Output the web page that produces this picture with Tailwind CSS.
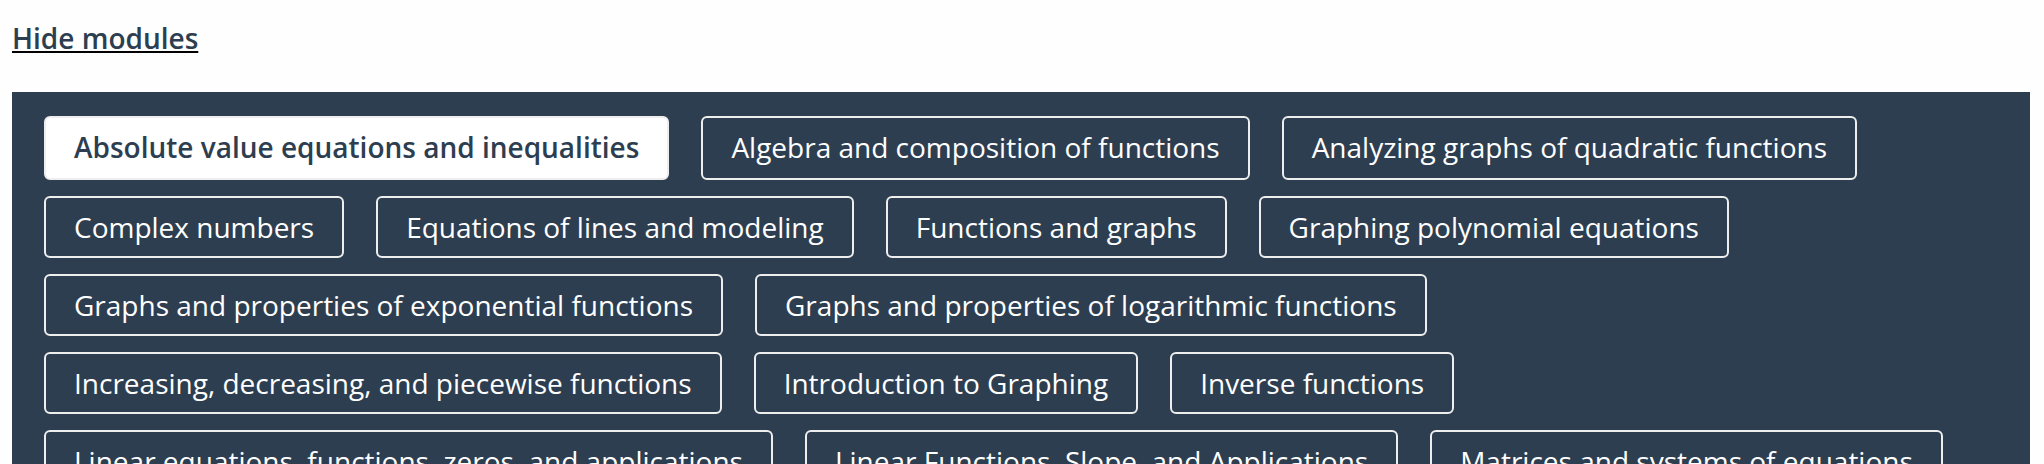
<!DOCTYPE html>
<html lang="en">
<head>
<meta charset="utf-8">
<title>Modules</title>
<script src="https://cdn.jsdelivr.net/npm/@tailwindcss/browser@4"></script>
</head>
<body class="h-screen overflow-hidden bg-[#fefefe] pl-3 pr-3.5 pt-[19px] font-['Open_Sans',sans-serif] text-[28px] leading-[38px] text-[#2d3e50]">
<header class="mb-[35px] flex">
<button type="button" class="font-semibold underline decoration-black decoration-2 underline-offset-[2px] [text-decoration-skip-ink:none]">Hide modules</button>
</header>
<nav aria-label="Modules" class="flex flex-wrap gap-x-8 gap-y-4 bg-[#2d3e50] px-8 py-6 text-white">
<button type="button" aria-pressed="true" class="rounded-md border-2 border-[#eeeeee] bg-white px-7 pt-2.5 pb-3 font-semibold text-[#2d3e50]">Absolute value equations and inequalities</button>
<button type="button" class="rounded-md border-2 border-[#eeeeee] px-7 pt-2.5 pb-3">Algebra and composition of functions</button>
<button type="button" class="rounded-md border-2 border-[#eeeeee] px-7 pt-2.5 pb-3">Analyzing graphs of quadratic functions</button>
<button type="button" class="rounded-md border-2 border-[#eeeeee] px-7 py-2.5">Complex numbers</button>
<button type="button" class="rounded-md border-2 border-[#eeeeee] px-7 py-2.5">Equations of lines and modeling</button>
<button type="button" class="rounded-md border-2 border-[#eeeeee] px-7 py-2.5">Functions and graphs</button>
<button type="button" class="rounded-md border-2 border-[#eeeeee] px-7 py-2.5">Graphing polynomial equations</button>
<button type="button" class="rounded-md border-2 border-[#eeeeee] px-7 py-2.5">Graphs and properties of exponential functions</button>
<button type="button" class="rounded-md border-2 border-[#eeeeee] px-7 py-2.5">Graphs and properties of logarithmic functions</button>
<button type="button" class="rounded-md border-2 border-[#eeeeee] px-7 py-2.5">Increasing, decreasing, and piecewise functions</button>
<button type="button" class="rounded-md border-2 border-[#eeeeee] px-7 py-2.5">Introduction to Graphing</button>
<button type="button" class="rounded-md border-2 border-[#eeeeee] px-7 py-2.5">Inverse functions</button>
<button type="button" class="rounded-md border-2 border-[#eeeeee] px-7 py-2.5">Linear equations, functions, zeros, and applications</button>
<button type="button" class="rounded-md border-2 border-[#eeeeee] px-7 py-2.5">Linear Functions, Slope, and Applications</button>
<button type="button" class="rounded-md border-2 border-[#eeeeee] px-7 py-2.5">Matrices and systems of equations</button>
</nav>
</body>
</html>
